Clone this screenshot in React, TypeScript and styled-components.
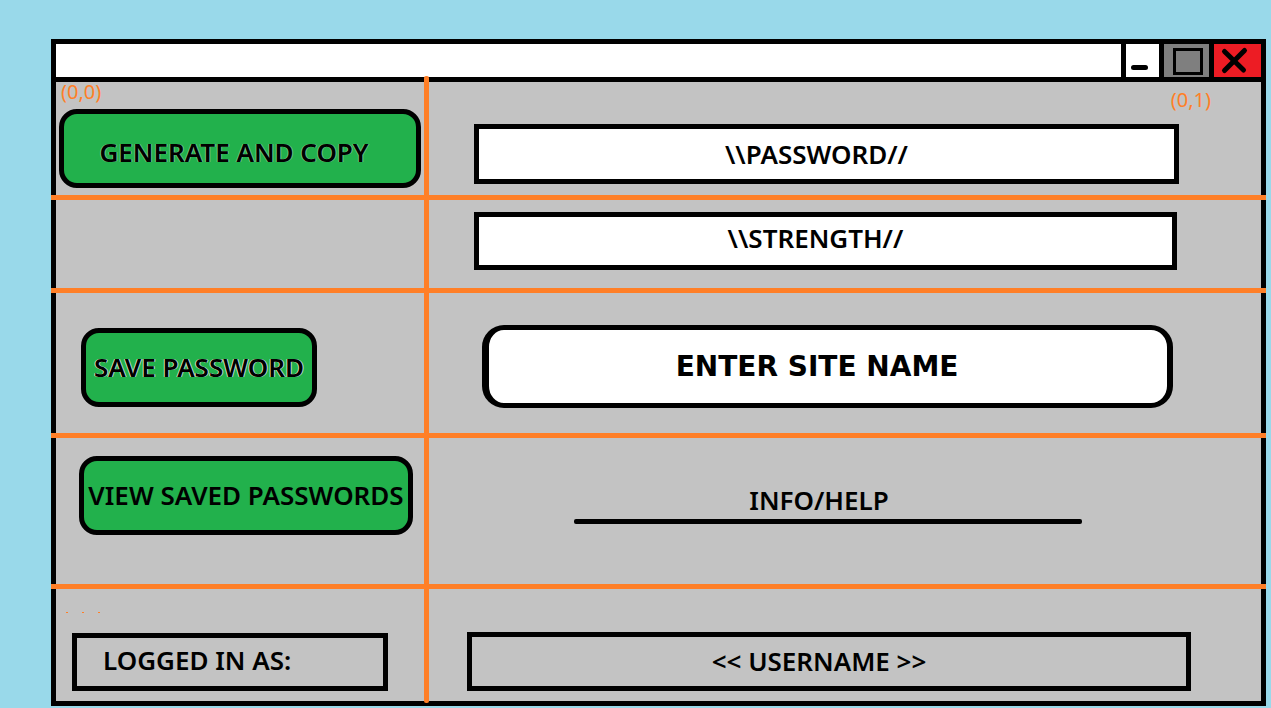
import React from "react";
import styled, { createGlobalStyle } from "styled-components";

const ink = "#000000";
const orange = "#ff7f27";
const green = "#22b14c";
const panel = "#c3c3c3";
const lettering = `"Comic Sans MS", "Noto Sans", sans-serif`;

const GlobalStyle = createGlobalStyle`
  *, *::before, *::after { box-sizing: border-box; }
  body {
    margin: 0;
    background: #99d9ea;
    color: ${ink};
    font-family: ${lettering};
    font-size: 26px;
    font-weight: 600;
    line-height: 30px;
  }
`;

const Desktop = styled.main`
  padding: 39px 5px 2px 51px;
`;

const Window = styled.section`
  border: 5px solid ${ink};
  background: ${panel};
`;

const TitleBar = styled.header`
  display: flex;
  justify-content: flex-end;
  height: 38px;
  border-bottom: 5px solid ${ink};
  background: #ffffff;
`;

const WindowButton = styled.button<{ $width: number; $fill: string }>`
  display: flex;
  width: ${(p) => p.$width}px;
  padding: 0;
  border: 0;
  border-left: 5px solid ${ink};
  background: ${(p) => p.$fill};
`;

const Board = styled.div`
  position: relative;

  &::after {
    content: "";
    position: absolute;
    top: -6px;
    bottom: -2px;
    left: 368px;
    width: 5px;
    border-radius: 2px;
    background: ${orange};
  }
`;

const Row = styled.div<{ $last?: boolean }>`
  display: grid;
  grid-template-columns: 373px 1fr;
  margin: 0 -5px;
  padding: 0 5px;
  border-bottom: ${(p) => (p.$last ? "0" : `5px solid ${orange}`)};
`;

const Cell = styled.div<{ $pad: string }>`
  display: flex;
  flex-direction: column;
  align-items: flex-start;
  padding: ${(p) => p.$pad};
`;

const Coordinate = styled.span<{ $end?: boolean }>`
  align-self: ${(p) => (p.$end ? "flex-end" : "flex-start")};
  margin: ${(p) => (p.$end ? "0 -32px 14px 0" : "0 0 7px 2px")};
  color: ${orange};
  font-size: 20px;
  font-weight: 400;
  line-height: 20px;
`;

const ActionButton = styled.button<{ $width: number; $inset?: string; $halo?: number }>`
  width: ${(p) => p.$width}px;
  height: 79px;
  padding: ${(p) => p.$inset ?? "0 0 2px"};
  border: 5px solid ${ink};
  border-radius: 18px;
  background: ${green};
  color: ${ink};
  font: inherit;
  white-space: nowrap;
  text-shadow:
    -1px 0 rgba(255, 236, 200, ${(p) => p.$halo ?? 0}),
    1px 0 rgba(200, 226, 255, ${(p) => p.$halo ?? 0});
`;

const Readout = styled.output<{ $height: number; $clear?: boolean; $raise?: number }>`
  display: flex;
  align-items: center;
  justify-content: center;
  width: 100%;
  height: ${(p) => p.$height}px;
  padding: 0 20px ${(p) => p.$raise ?? 0}px 0;
  border: 5px solid ${ink};
  background: ${(p) => (p.$clear ? "transparent" : "#ffffff")};
`;

const SiteInput = styled.input`
  width: 100%;
  height: 83px;
  padding: 0 22px 0 0;
  border: 5px solid ${ink};
  border-width: 5px 6px 5px 7px;
  border-radius: 22px;
  background: #ffffff;
  color: ${ink};
  font: 700 28px "DejaVu Sans", sans-serif;
  text-align: center;

  &::placeholder {
    color: ${ink};
    opacity: 1;
  }
`;

const HelpLink = styled.a`
  width: 100%;
  padding-right: 18px;
  color: ${ink};
  line-height: 34px;
  text-align: center;
  text-decoration: none;
`;

const Rule = styled.hr`
  width: 100%;
  height: 5px;
  margin: 2px 0 0;
  border: 0;
  border-radius: 2px;
  background: ${ink};
`;

const Dots = styled.div`
  display: flex;
  gap: 14px;
  margin: 0 0 20px -6px;
`;

const Dot = styled.i`
  width: 2px;
  height: 1px;
  background: ${orange};
`;

const LoginLabel = styled.div`
  display: flex;
  align-items: center;
  width: 316px;
  height: 58px;
  padding: 0 0 4px 26px;
  border: 5px solid ${ink};
`;

export default function App() {
  return (
    <>
      <GlobalStyle />
      <Desktop>
        <Window>
          <TitleBar>
            <WindowButton $width={38} $fill="#ffffff" aria-label="Minimize">
              <svg width="33" height="33" fill="none" stroke={ink} strokeWidth="5" strokeLinecap="round">
                <path d="M7.5 23.5H19.5" />
              </svg>
            </WindowButton>
            <WindowButton $width={50} $fill="#7f7f7f" aria-label="Maximize">
              <svg width="45" height="33" fill="none" stroke={ink} strokeWidth="3">
                <path d="M10.5 5.5H37.5V29.5H10.5Z" />
              </svg>
            </WindowButton>
            <WindowButton $width={52} $fill="#ed1c24" aria-label="Close">
              <svg width="47" height="33" fill="none" stroke={ink} strokeWidth="5" strokeLinecap="round">
                <path d="M10.5 7.5L29.5 26M30.5 6.5L10.5 26.5" />
              </svg>
            </WindowButton>
          </TitleBar>
          <Board>
            <Row>
              <Cell $pad="0 0 7px 3px">
                <Coordinate>(0,0)</Coordinate>
                <ActionButton $width={362} $inset="6px 12px 0 0" $halo={0.4}>GENERATE AND COPY</ActionButton>
              </Cell>
              <Cell $pad="8px 82px 11px 45px">
                <Coordinate $end>(0,1)</Coordinate>
                <Readout $height={60}>{"\\\\PASSWORD//"}</Readout>
              </Cell>
            </Row>
            <Row>
              <Cell $pad="0" />
              <Cell $pad="12px 84px 18px 45px">
                <Readout $height={58} $raise={6}>{"\\\\STRENGTH//"}</Readout>
              </Cell>
            </Row>
            <Row>
              <Cell $pad="35px 0 26px 25px">
                <ActionButton $width={236} $halo={0.85}>SAVE PASSWORD</ActionButton>
              </Cell>
              <Cell $pad="32px 88px 25px 53px">
                <SiteInput aria-label="Site name" placeholder="ENTER SITE NAME" />
              </Cell>
            </Row>
            <Row>
              <Cell $pad="18px 0 49px 23px">
                <ActionButton $width={334}>VIEW SAVED PASSWORDS</ActionButton>
              </Cell>
              <Cell $pad="45px 179px 0 145px">
                <HelpLink href="#help">INFO/HELP</HelpLink>
                <Rule />
              </Cell>
            </Row>
            <Row $last>
              <Cell $pad="23px 0 10px 16px">
                <Dots aria-hidden="true">
                  <Dot />
                  <Dot />
                  <Dot />
                </Dots>
                <LoginLabel>LOGGED IN AS:</LoginLabel>
              </Cell>
              <Cell $pad="43px 70px 10px 38px">
                <Readout $height={59} $clear $raise={2}>{"<< USERNAME >>"}</Readout>
              </Cell>
            </Row>
          </Board>
        </Window>
      </Desktop>
    </>
  );
}
